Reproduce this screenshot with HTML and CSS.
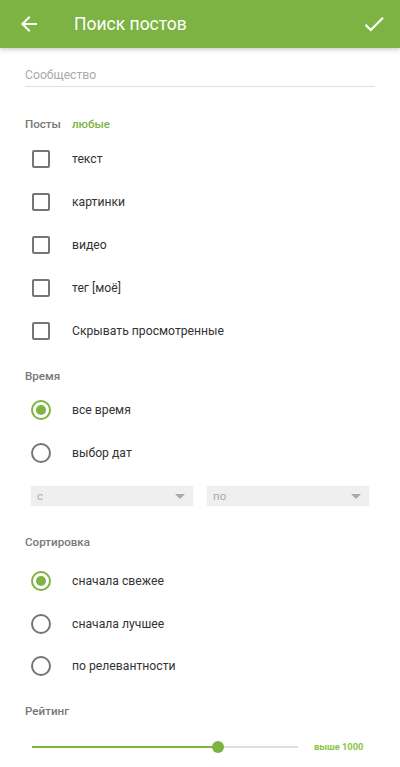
FILE: index.html
```html
<!DOCTYPE html>
<html lang="ru">
<head>
<meta charset="utf-8">
<link rel="stylesheet" href="styles.css">
</head>
<body>
<header class="appbar">
  <svg class="icon back" width="24" height="24" viewBox="0 0 24 24"><path d="M20 11H7.83l5.59-5.59L12 4l-8 8 8 8 1.41-1.41L7.83 13H20v-2z" fill="#fff"/></svg>
  <h1 class="title">Поиск постов</h1>
  <svg class="icon ok" width="24" height="24" viewBox="0 0 24 24"><path d="M9 16.17L4.83 12l-1.42 1.41L9 19 21 7l-1.41-1.41z" fill="#fff"/></svg>
</header>
<main class="content">
  <div class="field">Сообщество</div>

  <div class="section section-posts"><span>Посты</span><span class="accent">любые</span></div>
  <div class="list list-check">
    <div class="row"><span class="checkbox"></span><span class="label">текст</span></div>
    <div class="row"><span class="checkbox"></span><span class="label">картинки</span></div>
    <div class="row"><span class="checkbox"></span><span class="label">видео</span></div>
    <div class="row"><span class="checkbox"></span><span class="label">тег [моё]</span></div>
    <div class="row"><span class="checkbox"></span><span class="label">Скрывать просмотренные</span></div>
  </div>

  <div class="section section-time">Время</div>
  <div class="list list-time">
    <div class="row"><span class="radio checked"></span><span class="label">все время</span></div>
    <div class="row"><span class="radio"></span><span class="label">выбор дат</span></div>
  </div>
  <div class="dates">
    <div class="select"><span>с</span><span class="caret"></span></div>
    <div class="select"><span>по</span><span class="caret"></span></div>
  </div>

  <div class="section section-sort">Сортировка</div>
  <div class="list list-sort">
    <div class="row"><span class="radio checked"></span><span class="label">сначала свежее</span></div>
    <div class="row"><span class="radio"></span><span class="label">сначала лучшее</span></div>
    <div class="row"><span class="radio"></span><span class="label">по релевантности</span></div>
  </div>

  <div class="section section-rating">Рейтинг</div>
  <div class="slider-row">
    <div class="slider">
      <div class="track"><div class="fill" style="width:186px"></div></div>
      <div class="thumb" style="left:186px"></div>
    </div>
    <span class="slider-value">выше 1000</span>
  </div>
</main>
</body>
</html>
```
FILE: styles.css
```css
* { box-sizing: border-box; }
html, body { margin: 0; padding: 0; background: #fff; }
body {
  font-family: Roboto, "Noto Sans", "Liberation Sans", sans-serif;
  color: #333;
  width: 400px;
  height: 767px;
  overflow: hidden;
}
.appbar {
  height: 48px;
  background: #7cb342;
  display: flex;
  align-items: center;
  padding: 0 13px 0 17px;
  box-shadow: 0 2px 4px rgba(0,0,0,0.18);
  position: relative;
}
.title {
  margin: 0 0 0 33px;
  font-size: 17.5px;
  font-weight: 400;
  color: #fff;
  flex: 1;
}
.icon.ok { width: 26px; height: 26px; }
.content { padding: 0 25px; }
.field {
  margin-top: 16px;
  height: 23px;
  border-bottom: 1px solid #e0e0e0;
  font-size: 12.2px;
  color: #aaa;
  line-height: 22px;
}
.section {
  height: 16px;
  line-height: 16px;
  font-size: 11.6px;
  font-weight: 500;
  color: #777;
  display: flex;
  gap: 11px;
}
.accent { color: #7cb342; }
.section-posts { margin-top: 29px; }
.section-time { margin-top: 16px; }
.section-sort { margin-top: 28px; }
.section-rating { margin-top: 15px; }
.list-check { margin-top: 5px; }
.list-time { margin-top: 4px; }
.list-sort { margin-top: 10px; }
.row {
  height: 43px;
  display: flex;
  align-items: center;
}
.list-sort .row { height: 42.5px; }
.label { font-size: 12.2px; color: #333; }
.checkbox {
  width: 18px; height: 18px;
  border: 2px solid #757575;
  border-radius: 2px;
  margin-left: 7px;
  margin-right: 22px;
}
.radio {
  width: 20px; height: 20px;
  border: 2px solid #757575;
  border-radius: 50%;
  margin-left: 6px;
  margin-right: 21px;
  display: flex;
  align-items: center;
  justify-content: center;
}
.radio.checked { border-color: #7cb342; }
.radio.checked::after {
  content: "";
  width: 10px; height: 10px;
  border-radius: 50%;
  background: #7cb342;
}
.dates {
  margin-top: 12px;
  margin-left: 6px;
  display: flex;
  gap: 14px;
}
.select {
  width: 162px;
  height: 20px;
  background: #efefef;
  display: flex;
  align-items: center;
  justify-content: space-between;
  padding: 0 8px 0 6px;
  font-size: 11.5px;
  color: #aaa;
}
.caret {
  width: 0; height: 0;
  border-left: 5px solid transparent;
  border-right: 5px solid transparent;
  border-top: 5px solid #aaa;
}
.slider-row {
  margin-top: 18px;
  height: 20px;
  display: flex;
  align-items: center;
}
.slider {
  position: relative;
  margin-left: 7px;
  width: 266px;
  height: 20px;
  display: flex;
  align-items: center;
}
.track {
  width: 100%;
  height: 2px;
  background: #e0e0e0;
}
.fill { height: 2px; background: #7cb342; }
.thumb {
  position: absolute;
  top: 4px;
  width: 12px; height: 12px;
  margin-left: -6px;
  border-radius: 50%;
  background: #7cb342;
}
.slider-value {
  margin-left: 16px;
  font-size: 9.3px;
  font-weight: 700;
  color: #8bc34a;
}
```
